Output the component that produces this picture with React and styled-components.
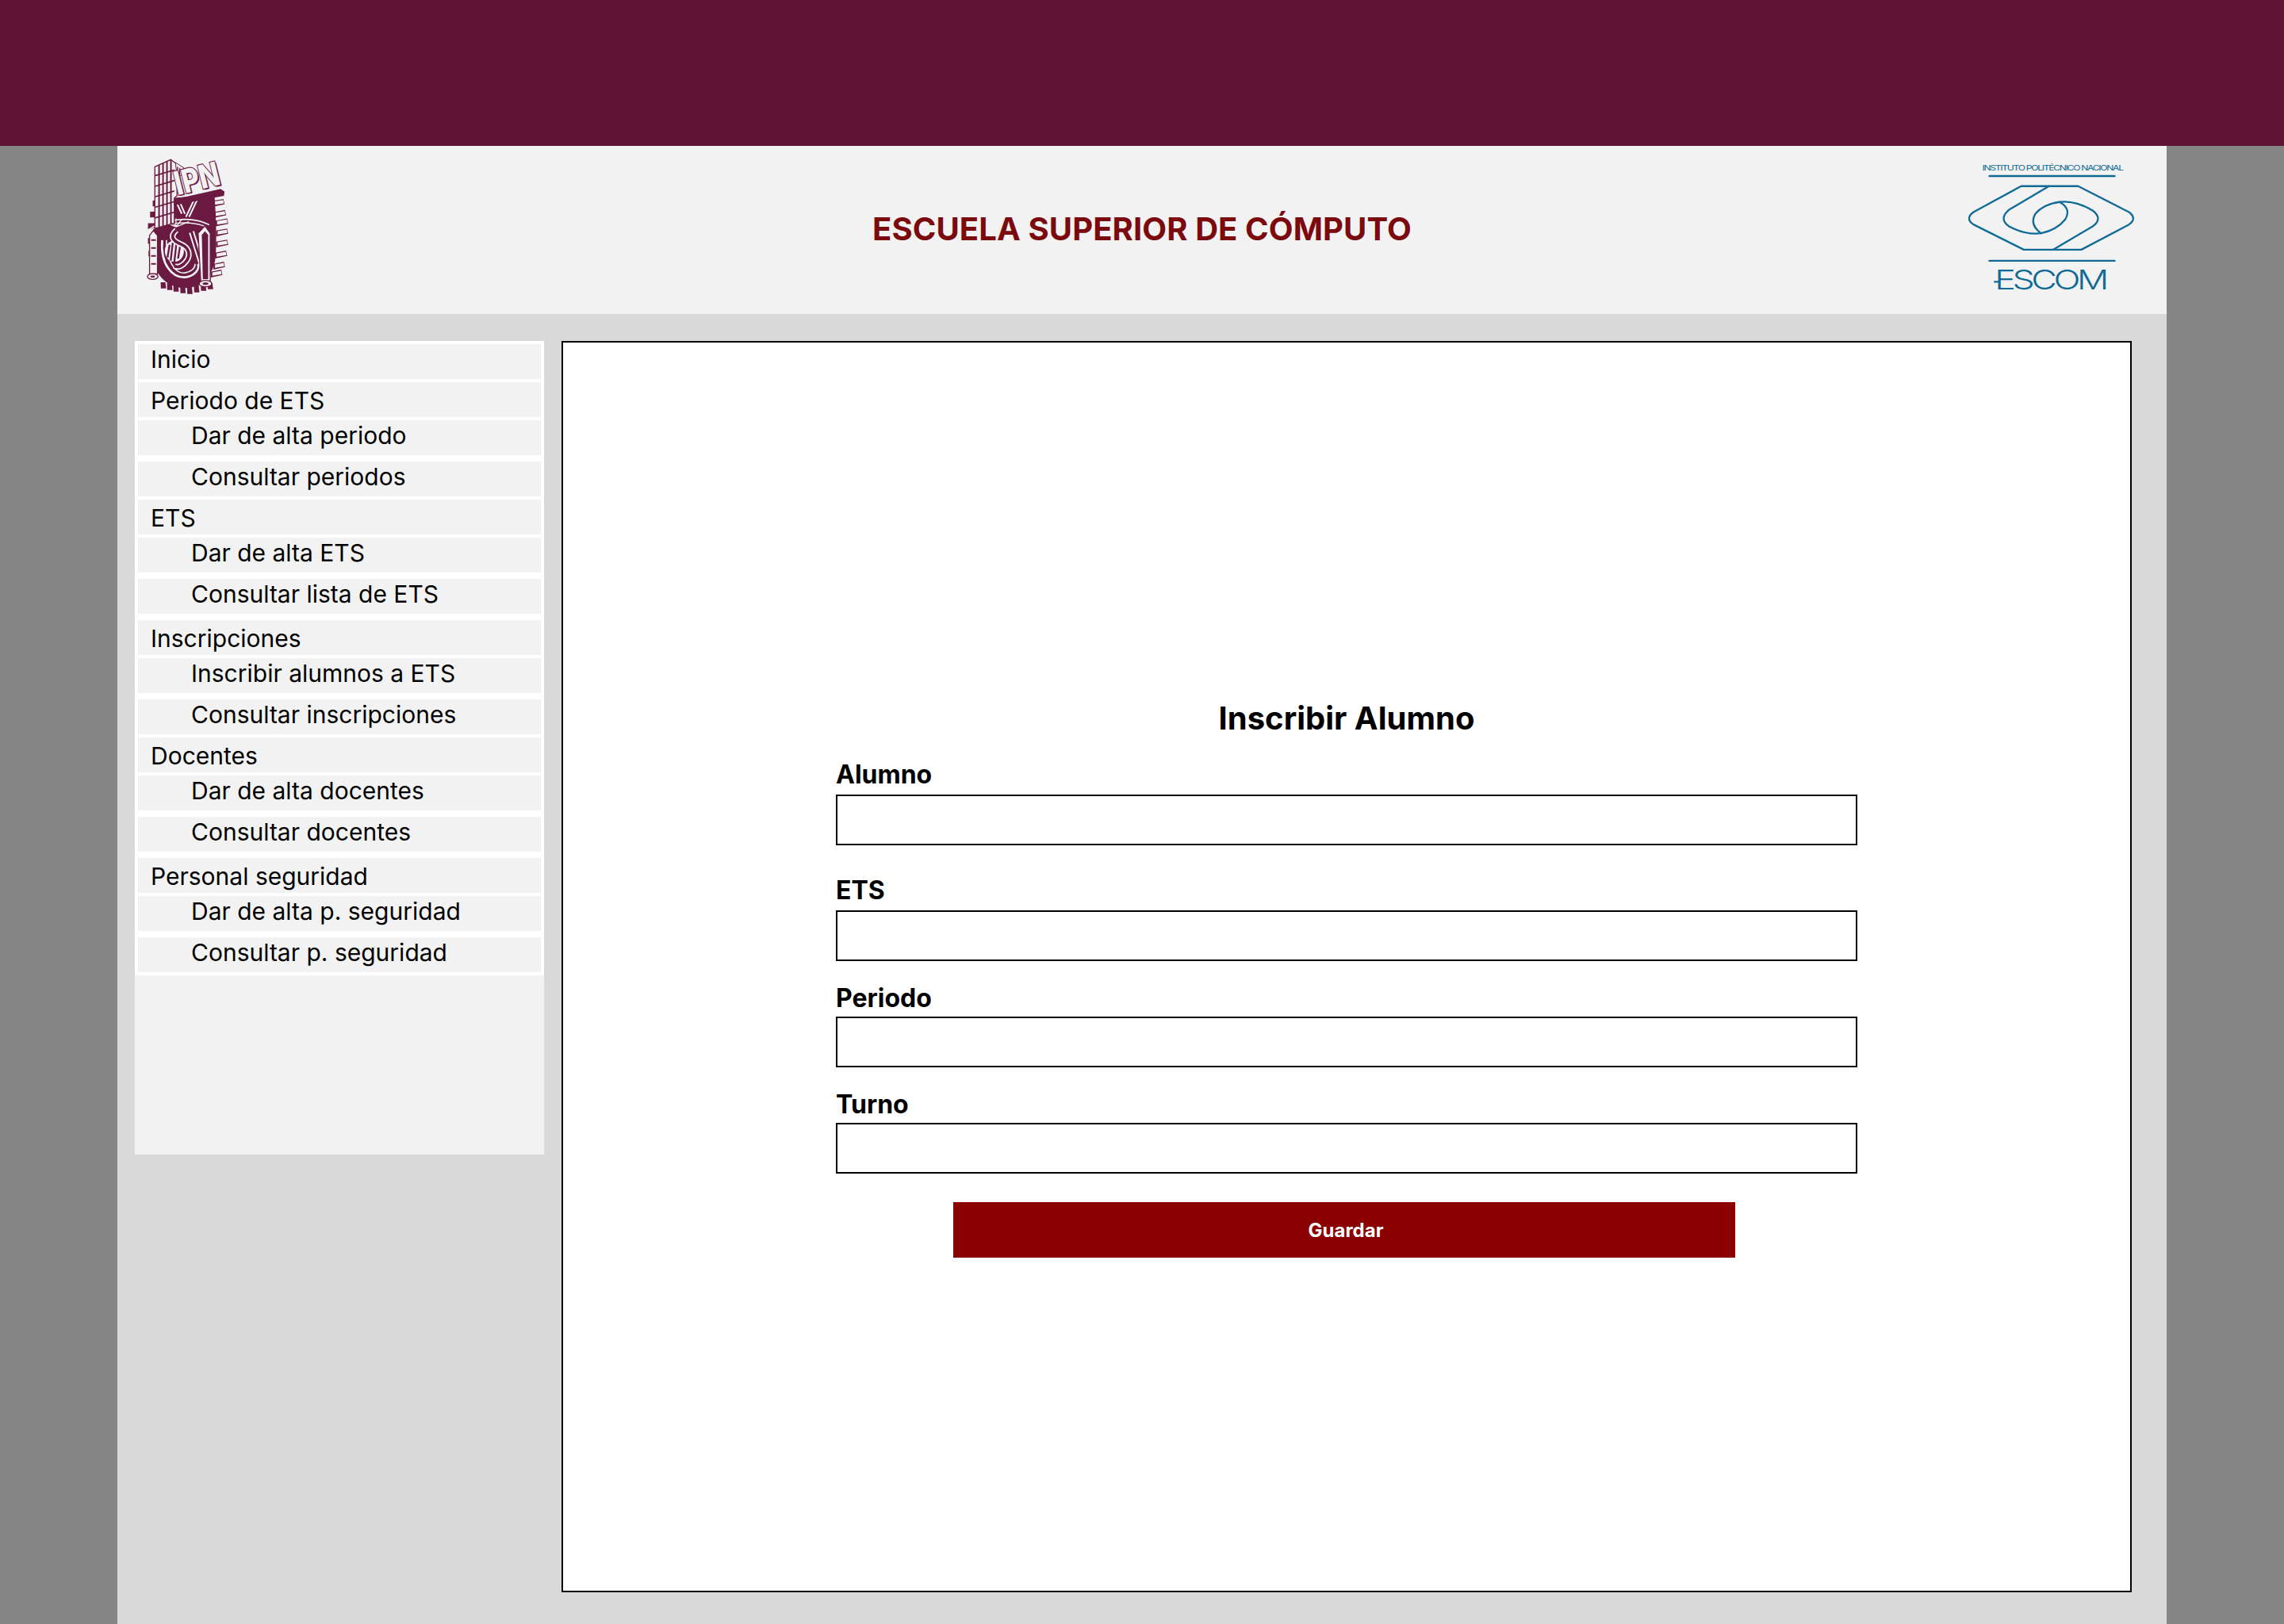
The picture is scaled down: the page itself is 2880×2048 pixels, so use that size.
import styled, { createGlobalStyle } from "styled-components";

const BURGUNDY = "#6b1a42";
const LOGO_BG = "#f2f2f2";
const ESCOM_BLUE = "#106a96";

const MENU = [
  { label: "Inicio", gap: 4, top: 0 },
  { label: "Periodo de ETS", gap: 4, top: 4 },
  { label: "Dar de alta periodo", sub: true, gap: 8 },
  { label: "Consultar periodos", sub: true, gap: 4 },
  { label: "ETS", gap: 4, top: 4 },
  { label: "Dar de alta ETS", sub: true, gap: 8 },
  { label: "Consultar lista de ETS", sub: true, gap: 8 },
  { label: "Inscripciones", gap: 4, top: 4 },
  { label: "Inscribir alumnos a ETS", sub: true, gap: 8 },
  { label: "Consultar inscripciones", sub: true, gap: 4 },
  { label: "Docentes", gap: 4, top: 4 },
  { label: "Dar de alta docentes", sub: true, gap: 8 },
  { label: "Consultar docentes", sub: true, gap: 8 },
  { label: "Personal seguridad", gap: 4, top: 4 },
  { label: "Dar de alta p. seguridad", sub: true, gap: 8 },
  { label: "Consultar p. seguridad", sub: true, gap: 4 },
];

const FIELDS = [
  { label: "Alumno", gap: 39, top: 0 },
  { label: "ETS", gap: 27, top: 0 },
  { label: "Periodo", gap: 27, top: 2 },
  { label: "Turno", gap: 36, top: 2 },
];

const RIGHT_TEETH = [
  [396, 250, 30], [404, 292, 28], [410, 324, 30], [412, 362, 28], [412, 404, 28],
  [408, 446, 28], [402, 488, 26], [392, 518, 26],
];
const LEFT_TEETH = [[158, 250], [148, 292], [140, 336], [140, 392], [142, 440], [146, 480]];
const BOTTOM_TEETH = [188, 212, 236, 262, 288, 314, 340, 366];

const GlobalStyle = createGlobalStyle`
  * {
    box-sizing: border-box;
  }
  html, body {
    margin: 0;
    padding: 0;
    background: #868686;
    font-family: Inter, "Liberation Sans", sans-serif;
  }
`;

const Page = styled.div`
  width: 2880px;
  height: 2048px;
  overflow: hidden;
  background: #868686;
`;
const TopBar = styled.div`
  height: 184px;
  background: #5f1232;
`;
const Container = styled.div`
  width: 2584px;
  height: 1864px;
  margin: 0 auto;
  background: #d9d9d9;
`;
const Header = styled.header`
  height: 212px;
  padding: 14px 38px 0 35px;
  background: #f2f2f2;
  display: grid;
  grid-template-columns: 1fr auto 1fr;
  align-items: start;
`;
const Title = styled.h1`
  margin: 61px 0 0 3px;
  font-size: 40px;
  line-height: 60px;
  font-weight: 700;
  letter-spacing: 0.1px;
  color: #7b0a0f;
  white-space: nowrap;
`;
const RightLogo = styled.div`
  justify-self: end;
  padding-top: 5px;
`;
const LogoSvg = styled.svg`
  display: block;
  overflow: visible;
`;
const Content = styled.div`
  display: flex;
  gap: 22px;
  padding: 34px 44px 0 22px;
`;
const Sidebar = styled.nav`
  width: 516px;
  height: 1026px;
  background: #f2f2f2;
`;
const MenuList = styled.ul`
  display: flow-root;
  list-style: none;
  margin: 0;
  padding: 4px 4px 0;
  background: #fff;
`;
const MenuItem = styled.li`
  height: 44px;
  margin-bottom: ${(props) => props.$gap}px;
  padding-top: ${(props) => props.$top || 0}px;
  padding-left: ${(props) => (props.$sub ? 67 : 16)}px;
  background: #f2f2f2;
  font-size: 30px;
  line-height: 38px;
  color: #000;
  white-space: nowrap;
`;
const Main = styled.main`
  flex: 1;
  height: 1578px;
  padding-top: 450px;
  background: #fff;
  border: 2px solid #000;
`;
const Form = styled.form`
  width: 1288px;
  margin: 0 auto;
`;
const FormTitle = styled.h2`
  margin: 0 0 29px;
  font-size: 40px;
  line-height: 48px;
  font-weight: 700;
  text-align: center;
  color: #000;
`;
const Field = styled.div`
  margin-bottom: ${(props) => props.$gap}px;
`;
const Label = styled.label`
  display: block;
  height: 43px;
  padding-top: ${(props) => props.$top}px;
  font-size: 32px;
  line-height: 36px;
  font-weight: 700;
  color: #000;
`;
const Input = styled.input`
  display: block;
  width: 100%;
  height: 64px;
  border: 2px solid #000;
  border-radius: 0;
  background: #fff;
`;
const SaveButton = styled.button`
  display: block;
  width: 986px;
  height: 70px;
  margin-left: 148px;
  padding: 0 0 0 4px;
  border: 0;
  background: #8b0000;
  color: #fff;
  font-family: inherit;
  font-size: 24px;
  font-weight: 700;
`;

function IpnLogo() {
  return (
    <LogoSvg width="107" height="178" viewBox="130 85 320 535" aria-label="IPN">
      {LEFT_TEETH.map(([x, y]) => (
        <rect key={y} x={x} y={y} width="36" height="22" fill={BURGUNDY} />
      ))}
      {BOTTOM_TEETH.map((x, i) => (
        <path
          key={x}
          d={`M${x} ${572 - Math.abs(i - 4) * 3} l18 0 l3 ${34 - Math.abs(i - 3.5) * 3} l-20 0 Z`}
          fill={BURGUNDY}
        />
      ))}
      {RIGHT_TEETH.map(([x, y, w]) => (
        <g key={y}>
          <path d={`M${x - 14} ${y + 2} L${x + w} ${y - 6} L${x + w + 4} ${y + 14} L${x - 14} ${y + 24} Z`} fill={BURGUNDY} />
          <path d={`M${x - 8} ${y + 4} L${x + w - 1} ${y - 2} L${x + w + 1} ${y + 11} L${x - 8} ${y + 17} Z`} fill={LOGO_BG} />
        </g>
      ))}
      <path d="M236 240 L392 228 Q404 400 394 480 Q370 580 280 582 Q195 580 160 490 L160 350 Z" fill={BURGUNDY} />
      <path d="M140 362 C195 322 300 305 372 342" stroke={LOGO_BG} strokeWidth="5" fill="none" />
      <path d="M152 360 C200 336 300 322 360 350" stroke={LOGO_BG} strokeWidth="4" fill="none" />
      <path d="M246 350 L205 332 M246 350 L226 324 M246 350 L246 318 M246 350 L270 320 M246 350 L295 330" stroke={LOGO_BG} strokeWidth="4" />
      <path d="M250 262 L268 300 M262 258 L280 300 M330 240 L296 312 M318 240 L284 312" stroke={LOGO_BG} strokeWidth="6" />
      <path d="M298 372 L338 500 M312 366 L350 488" stroke={LOGO_BG} strokeWidth="6" />
      <path d="M194 400 C186 490 232 548 286 540 C318 534 336 510 330 490" stroke={LOGO_BG} strokeWidth="8" fill="none" />
      <path d="M210 400 C208 470 240 530 280 524 C304 520 320 505 318 490" stroke={LOGO_BG} strokeWidth="5" fill="none" />
      <ellipse cx="240" cy="442" rx="36" ry="40" fill={LOGO_BG} />
      <path d="M222 418 L214 466 M234 410 L226 478 M248 410 L240 482 M262 420 L254 470" stroke={BURGUNDY} strokeWidth="7" />
      <path d="M248 362 C222 385 232 402 266 416 C298 430 306 462 276 490 C262 502 250 504 240 498" stroke={LOGO_BG} strokeWidth="22" fill="none" />
      <path d="M248 362 C222 385 232 402 266 416 C298 430 306 462 276 490 C262 502 250 504 240 498" stroke={BURGUNDY} strokeWidth="11" fill="none" />
      <path d="M146 382 L160 364 L176 382 L176 528 L146 528 Z" fill={LOGO_BG} stroke={BURGUNDY} strokeWidth="4" />
      <path d="M152 400 H170 M152 430 H170 M152 460 H170 M152 490 H170" stroke={BURGUNDY} strokeWidth="6" />
      <path d="M330 374 L356 346 L376 374 L376 556 L340 556 Z" fill={LOGO_BG} stroke={BURGUNDY} strokeWidth="4" />
      <path d="M344 380 L356 366 L368 380 L368 548 L348 548 Z" fill={BURGUNDY} />
      <ellipse cx="158" cy="538" rx="20" ry="11" fill={LOGO_BG} stroke={BURGUNDY} strokeWidth="4" />
      <ellipse cx="158" cy="538" rx="9" ry="4" fill={BURGUNDY} />
      <ellipse cx="358" cy="565" rx="24" ry="12" fill={LOGO_BG} stroke={BURGUNDY} strokeWidth="4" />
      <ellipse cx="358" cy="565" rx="11" ry="5" fill={BURGUNDY} />
      <path d="M166 122 L226 95 L250 112 L250 232 L240 240 L240 336 L166 356 Z" fill={LOGO_BG} stroke={BURGUNDY} strokeWidth="4" />
      <path d="M182 116 V352 M197 108 V348 M212 102 V344 M227 96 V340" stroke={BURGUNDY} strokeWidth="6" />
      <path d="M166 156 L240 134 M166 196 L240 174 M166 236 L240 214 M166 276 L240 254 M166 316 L240 294" stroke={BURGUNDY} strokeWidth="5" />
      <path d="M244 106 L276 126 L276 152 L250 158 Z" fill={LOGO_BG} stroke={BURGUNDY} strokeWidth="3" />
      <path d="M252 122 V150 M260 126 V150 M268 130 V150" stroke={BURGUNDY} strokeWidth="4" />
      <path d="M238 246 L415 206 L430 216 L428 232 L238 268 Z" fill={BURGUNDY} />
      <text x="258" y="234" transform="rotate(-14 258 234)" fontFamily="Inter, sans-serif" fontWeight="800" fontSize="124" textLength="172" lengthAdjust="spacingAndGlyphs" fill={BURGUNDY}>IPN</text>
      <text x="252" y="230" transform="rotate(-14 252 230)" fontFamily="Inter, sans-serif" fontWeight="800" fontSize="124" textLength="172" lengthAdjust="spacingAndGlyphs" fill={LOGO_BG} stroke={BURGUNDY} strokeWidth="7" paintOrder="stroke">IPN</text>
    </LogoSvg>
  );
}

function EscomLogo() {
  return (
    <LogoSvg width="214" height="167" viewBox="120 70 640 500" fill="none" aria-label="ESCOM">
      <text transform="translate(178 106) scale(1.3 1)" fontFamily="Inter, sans-serif" fontSize="28" letterSpacing="-3" fill={ESCOM_BLUE}>INSTITUTO POLITÉCNICO NACIONAL</text>
      <g stroke={ESCOM_BLUE} strokeWidth="7" strokeLinejoin="round" strokeLinecap="round">
        <path d="M205 127 H678" />
        <path d="M325 165 H540 L732 263 Q764 287 732 310 L552 405 H335 L145 310 Q112 287 145 263 Z" />
        <path d="M430 165 L278 255 Q240 288 278 316 Q340 350 400 343" />
        <path d="M445 405 L596 316 Q634 288 596 258 Q530 218 470 225" />
        <path d="M470 225 Q515 250 492 290 Q460 330 400 343 Q355 310 378 270 Q410 232 470 225 Z" />
        <path d="M205 447 H678" />
        <path d="M225 526 H240" />
      </g>
      <text transform="translate(225 555) scale(1.3 1)" fontFamily="Inter, sans-serif" fontWeight="300" fontSize="103" letterSpacing="-10" fill={ESCOM_BLUE}>ESCOM</text>
    </LogoSvg>
  );
}

export default function App() {
  return (
    <Page>
      <GlobalStyle />
      <TopBar />
      <Container>
        <Header>
          <IpnLogo />
          <Title>ESCUELA SUPERIOR DE CÓMPUTO</Title>
          <RightLogo>
            <EscomLogo />
          </RightLogo>
        </Header>
        <Content>
          <Sidebar>
            <MenuList>
              {MENU.map((item) => (
                <MenuItem key={item.label} $sub={item.sub} $gap={item.gap} $top={item.top}>
                  {item.label}
                </MenuItem>
              ))}
            </MenuList>
          </Sidebar>
          <Main>
            <Form>
              <FormTitle>Inscribir Alumno</FormTitle>
              {FIELDS.map((field) => (
                <Field key={field.label} $gap={field.gap}>
                  <Label $top={field.top}>{field.label}</Label>
                  <Input />
                </Field>
              ))}
              <SaveButton type="button">Guardar</SaveButton>
            </Form>
          </Main>
        </Content>
      </Container>
    </Page>
  );
}
